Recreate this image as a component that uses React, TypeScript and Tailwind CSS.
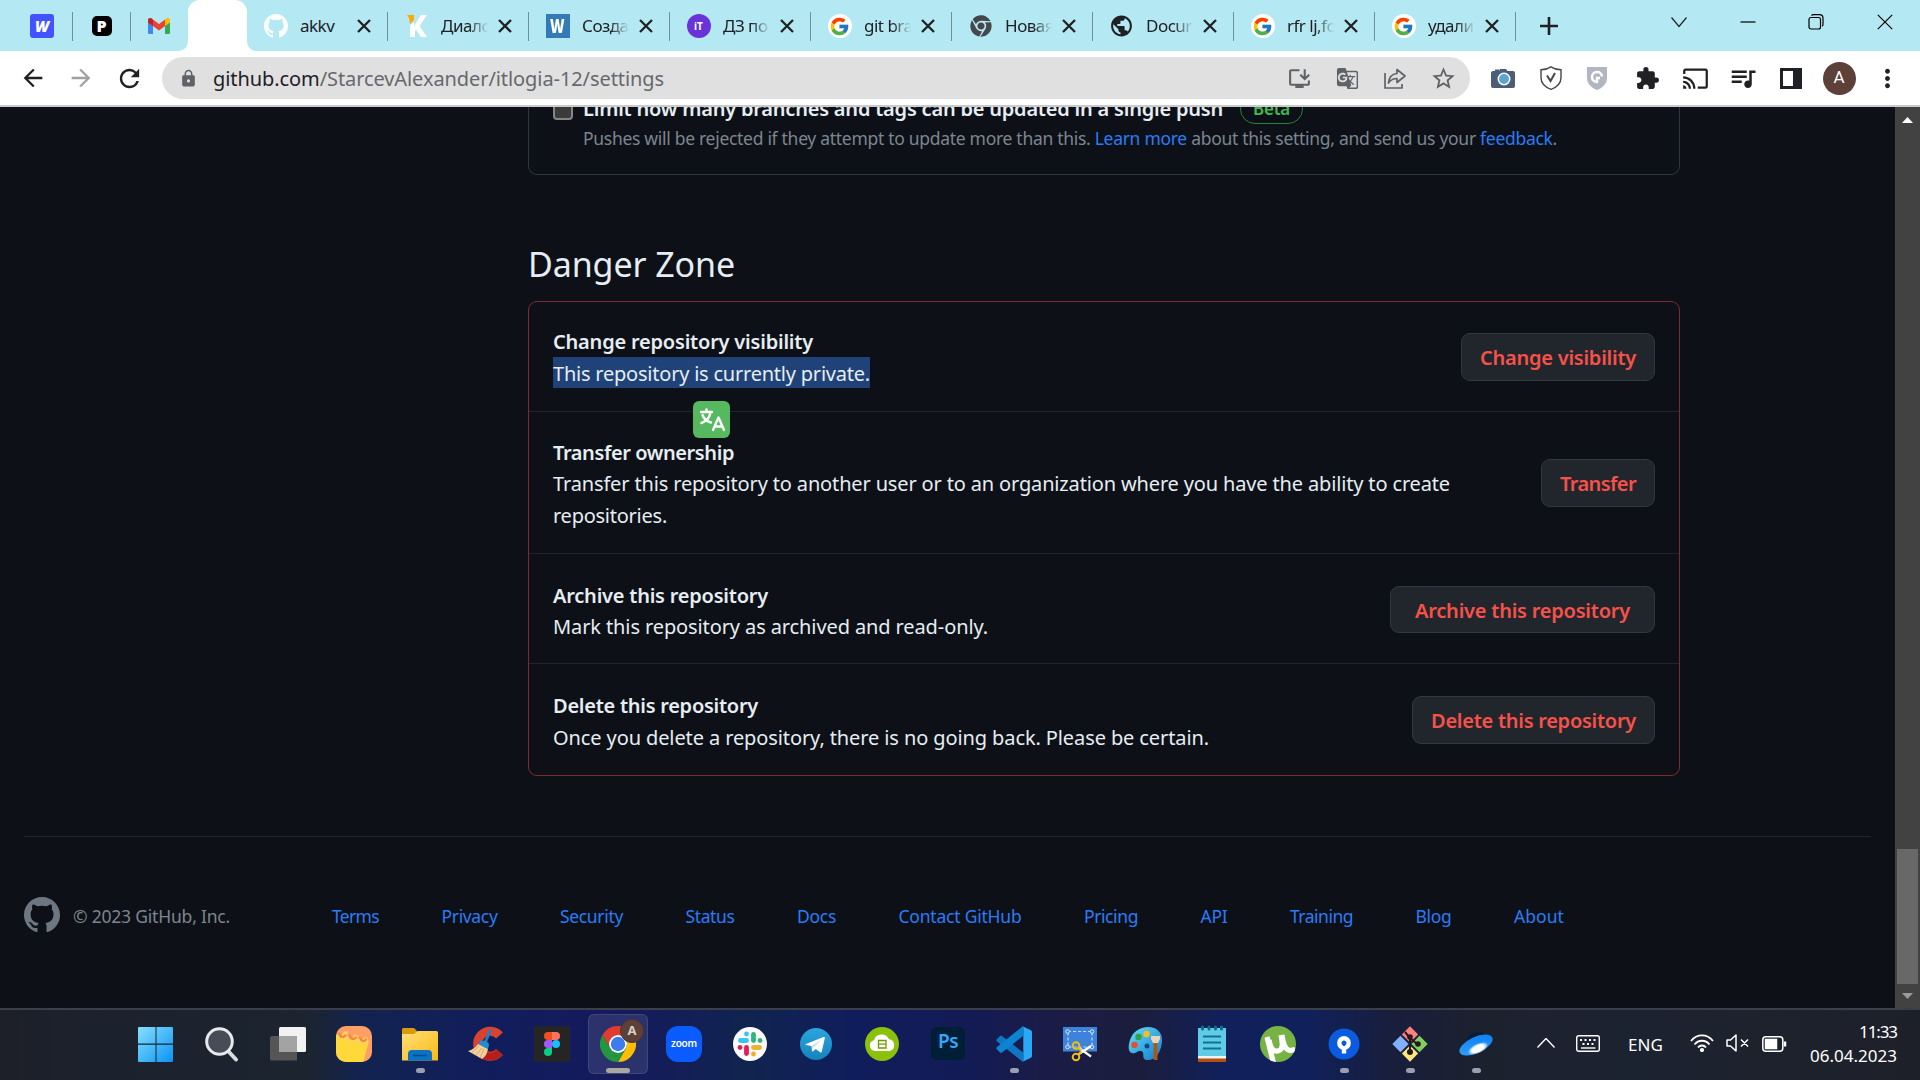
import React, { useLayoutEffect, useRef, useState } from "react";
import { FcGoogle } from "react-icons/fc";
import { FaChrome } from "react-icons/fa";
import {
  MdArrowBack, MdArrowForward, MdCast, MdExtension, MdGTranslate, MdInstallDesktop,
  MdLock, MdMoreVert, MdPublic, MdQueueMusic, MdRefresh, MdStarBorder,
} from "react-icons/md";

/** A single line of text whose tracking is tuned so that it takes the given width. */
function Line({ w, className = "", children }: { w: number; className?: string; children: React.ReactNode }) {
  const ref = useRef<HTMLSpanElement>(null);
  const [spacing, setSpacing] = useState(0);
  useLayoutEffect(() => {
    const el = ref.current;
    if (!el) return;
    const n = (el.textContent || "").length;
    setSpacing((w - el.getBoundingClientRect().width) / n);
  }, [w]);
  return (
    <span ref={ref} className={`inline-block shrink-0 whitespace-nowrap ${className}`} style={{ letterSpacing: spacing }}>
      {children}
    </span>
  );
}

const GithubMark = ({ className }: { className: string }) => (
  <svg viewBox="0 0 16 16" className={className} fill="currentColor">
    <path d="M8 0C3.58 0 0 3.58 0 8c0 3.54 2.29 6.53 5.47 7.59.4.07.55-.17.55-.38 0-.19-.01-.82-.01-1.49-2.01.37-2.53-.49-2.69-.94-.09-.23-.48-.94-.82-1.13-.28-.15-.68-.52-.01-.53.63-.01 1.08.58 1.23.82.72 1.21 1.87.87 2.33.66.07-.52.28-.87.51-1.07-1.78-.2-3.64-.89-3.64-3.95 0-.87.31-1.59.82-2.15-.08-.2-.36-1.02.08-2.12 0 0 .67-.21 2.2.82.64-.18 1.32-.27 2-.27.68 0 1.36.09 2 .27 1.53-1.04 2.2-.82 2.2-.82.44 1.1.16 1.92.08 2.12.51.56.82 1.27.82 2.15 0 3.07-1.87 3.75-3.65 3.95.29.25.54.73.54 1.48 0 1.07-.01 1.93-.01 2.2 0 .21.15.46.55.38A8.013 8.013 0 0 0 16 8c0-4.42-3.58-8-8-8z" />
  </svg>
);

/* ---------- Browser tabs ---------- */

const WFav = () => (
  <span className="flex size-6 items-center justify-center rounded-[3px] bg-[#4353ff] text-[15px] font-black italic text-white">W</span>
);
const PFav = () => (
  <span className="flex size-5 items-center justify-center rounded-[5px] bg-black text-[16px] font-black text-white">P</span>
);
const GmailFav = () => (
  <svg viewBox="0 0 22 16" className="-ml-px h-4 w-[22px]">
    <path d="M0 2v12.500A1.500 1.500 0 0 0 1.500 16H5V6z" fill="#4285f4" />
    <path d="M22 2v12.500a1.500 1.500 0 0 1-1.500 1.500H17V6z" fill="#34a853" />
    <path d="M5 1.500 11 6l6-4.500V8l-6 4.500L5 8z" fill="#ea4335" />
    <path d="M0 2C0 0 2.500-.600 4 .600L5 1.500V8L0 4.500z" fill="#c5221f" />
    <path d="M22 2c0-2-2.500-2.600-4-1.400L17 1.500V8l5-3.500z" fill="#fbbc04" />
  </svg>
);
const KFav = () => (
  <svg viewBox="0 0 24 24" className="size-6">
    <path d="M2 1h7v5L5 10l-1-6z" fill="#ffa800" />
    <path d="M5 11.500 9 8v4l7-11h6l-7.500 11L22 23h-6l-5-7.500L10 17v6H5z" fill="#fff" />
  </svg>
);
const WordFav = () => (
  <span className="flex size-6 items-center justify-center bg-[#337ab7] text-white">
    <span className="scale-x-[.7] text-[20px] font-black leading-none">W</span>
  </span>
);
const ItFav = () => (
  <span className="flex size-6 items-center justify-center rounded-full bg-[#6a33d8] text-[10px] font-bold text-white">iT</span>
);
const GoogleFav = () => (
  <span className="flex size-6 items-center justify-center rounded-full bg-white">
    <FcGoogle className="size-[21px]" />
  </span>
);

const tabs = [
  { icon: <GithubMark className="size-6 text-white" />, title: "akkv" },
  { icon: <KFav />, title: "Диало", fade: true },
  { icon: <WordFav />, title: "Созда", fade: true },
  { icon: <ItFav />, title: "ДЗ по", fade: true },
  { icon: <GoogleFav />, title: "git bra", fade: true },
  { icon: <FaChrome className="size-[22px] text-[#45474a]" />, title: "Новая", fade: true },
  { icon: <MdPublic className="size-[26px] text-[#1f2124]" />, title: "Docur", fade: true },
  { icon: <GoogleFav />, title: "rfr lj,fo", fade: true },
  { icon: <GoogleFav />, title: "удали", fade: true },
];

function TabStrip() {
  return (
    <div className="flex h-[51px] bg-[#b4e8f3] text-[#202124]">
      <div className="flex h-[52px] items-center">
        <div className="flex w-[72px] justify-center pl-3"><WFav /></div>
        <i className="h-[29px] w-px bg-[#6f929a]" />
        <div className="flex w-[57px] justify-center"><PFav /></div>
        <i className="h-[29px] w-px bg-[#6f929a]" />
        <div className="flex w-[57px] justify-center"><GmailFav /></div>
      </div>
      <svg viewBox="0 0 79 51" className="-ml-[10px] -mr-[10px] h-[51px] w-[79px] shrink-0">
        <path d="M0 51c6 0 10-4 10-11V12C10 5 15 0 22 0h35c7 0 12 5 12 12v28c0 7 4 11 10 11z" fill="#fff" />
      </svg>
      <div className="flex h-[52px] items-center">
        {tabs.map((t, i) => (
          <div key={i} className="flex h-[29px] w-[141px] items-center border-r border-[#6f929a] pl-[16px]">
            <div className="flex w-[25px] justify-center">{t.icon}</div>
            <div className={`ml-[12px] w-[47px] whitespace-nowrap text-[17px] leading-7 tracking-[-0.5px] ${t.fade ? "mask-r-from-60% mask-r-to-100%" : ""}`}>
              {t.title}
            </div>
            <svg viewBox="0 0 14 14" className="ml-[10px] size-[14px]" stroke="currentColor" strokeWidth="2.300"><path d="m1 1 12 12M13 1 1 13" /></svg>
          </div>
        ))}
      </div>
      <svg viewBox="0 0 18 18" className="ml-[24px] mt-[17px] size-[18px] shrink-0" stroke="currentColor" strokeWidth="2.600"><path d="M9 0v18M0 9h18" /></svg>
      <div className="ml-auto flex h-11 items-center">
        <svg viewBox="0 0 16 16" className="mx-[26.500px] size-4" fill="none" stroke="#222" strokeWidth="1.200"><path d="M.500 3.500 8 12.500l7.500-9" /></svg>
        <svg viewBox="0 0 16 16" className="mx-[26px] size-4" fill="none" stroke="#000" strokeWidth="1.200"><path d="M.500 8h15" /></svg>
        <svg viewBox="0 0 16 16" className="mx-[26.500px] size-4" fill="none" stroke="#000" strokeWidth="1.200">
          <rect x="1" y="3.500" width="11.500" height="11.500" rx="2" /><path d="M3.500 1.500c.5-.6 1-.8 2-.8h6c2 0 3.500 1.500 3.500 3.500v6c0 1-.2 1.500-.8 2" />
        </svg>
        <svg viewBox="0 0 16 16" className="ml-[26.500px] mr-[27px] size-4" fill="none" stroke="#000" strokeWidth="1.200"><path d="m.800.800 14.400 14.400M15.200.800.800 15.200" /></svg>
      </div>
    </div>
  );
}

/* ---------- Toolbar ---------- */

const Cell = ({ children }: { children: React.ReactNode }) => (
  <div className="flex w-12 shrink-0 items-center justify-center">{children}</div>
);

function Toolbar() {
  return (
    <div className="flex h-[56px] items-center border-b-2 border-[#cbcbcb] bg-white pl-[9px] pr-[9px] text-[#202124]">
      <Cell><MdArrowBack className="size-[28px]" /></Cell>
      <Cell><MdArrowForward className="size-[28px] text-[#a0a1a3]" /></Cell>
      <Cell><MdRefresh className="size-[29px]" /></Cell>
      <div className="ml-[9px] flex h-[42px] w-[1308px] items-center rounded-full bg-[#e0e0e0] pr-[3px] text-[#5f6368]">
        <MdLock className="ml-[17px] size-[19px]" />
        <Line w={451} className="ml-[15px] pt-px text-[20px] text-[#65686c]">
          <span className="text-[#202124]">github.com</span>/StarcevAlexander/itlogia-12/settings
        </Line>
        <div className="ml-auto flex">
          <Cell><MdInstallDesktop className="size-[25px]" /></Cell>
          <Cell><MdGTranslate className="size-[23px]" /></Cell>
          <Cell>
            <svg viewBox="0 0 24 24" className="size-6" fill="none" stroke="#5f6368" strokeWidth="1.700">
              <path d="M2 7v15h17v-4" /><path d="M14 3.500 22 10l-8 6.500v-4c-4 0-6.500 1.500-8.500 4.500.5-5.500 3.500-9 8.500-9.500z" strokeLinejoin="round" />
            </svg>
          </Cell>
          <Cell><MdStarBorder className="size-[27px]" /></Cell>
        </div>
      </div>
      <div className="ml-auto flex">
        <Cell>
          <svg viewBox="0 0 24 20" className="h-5 w-6">
            <path d="M2 3h2V1.500h4V3l1-2h6l1.500 2H22a2 2 0 0 1 2 2v13a2 2 0 0 1-2 2H2a2 2 0 0 1-2-2V5a2 2 0 0 1 2-2z" fill="#4c5d78" />
            <circle cx="13" cy="11" r="6.500" fill="#fff" /><circle cx="13" cy="11" r="5" fill="#5ba5d0" />
          </svg>
        </Cell>
        <Cell>
          <svg viewBox="0 0 22 24" className="h-6 w-[22px]" fill="none" stroke="#45474a" strokeWidth="1.400">
            <path d="M11 .800C8 2.800 5 3.700 1 3.800v7.700c0 6 5 10 10 11.800 5-1.800 10-5.800 10-11.800V3.800C17 3.700 14 2.800 11 .800z" />
            <path d="M7 9.500 10.500 15 15 7" strokeWidth="2" />
          </svg>
        </Cell>
        <Cell>
          <svg viewBox="0 0 20 23" className="-ml-1 h-[23px] w-5">
            <path d="M0 0h20v11c0 6-5 10-10 12C5 21 0 17 0 11z" fill="#b2b6c2" />
            <path d="M15 9.500A5 5 0 1 0 10 15v-4h3" fill="none" stroke="#fff" strokeWidth="2.500" />
          </svg>
        </Cell>
        <Cell><MdExtension className="size-[25px]" /></Cell>
        <Cell><MdCast className="size-[27px]" /></Cell>
        <Cell><MdQueueMusic className="size-[30px]" /></Cell>
        <Cell>
          <div className="h-[21px] w-[22px] border-[3px] border-r-[9px] border-[#202124]" />
        </Cell>
        <Cell><span className="flex size-[33px] items-center justify-center rounded-full bg-[#5d4037] font-[Roboto] text-[17px] text-white">A</span></Cell>
        <Cell><MdMoreVert className="size-[29px]" /></Cell>
      </div>
    </div>
  );
}

/* ---------- Settings page ---------- */

const rows = [
  { h: "h-[110px] border-b", title: "Change repository visibility", tw: 260, lines: [{ t: "This repository is currently private.", w: 317 }], selected: true, button: "Change visibility", bw: 156, box: "h-12 w-[194px]" },
  { h: "h-[142px] border-b", title: "Transfer ownership", tw: 181, lines: [{ t: "Transfer this repository to another user or to an organization where you have the ability to create", w: 897 }, { t: "repositories.", w: 114 }], button: "Transfer", bw: 76, box: "h-12 w-[114px]" },
  { h: "h-[110px] border-b pt-[2px]", title: "Archive this repository", tw: 215, lines: [{ t: "Mark this repository as archived and read-only.", w: 435 }], button: "Archive this repository", bw: 215, box: "h-[47px] w-[265px]" },
  { h: "h-[111px] pt-px", title: "Delete this repository", tw: 205, lines: [{ t: "Once you delete a repository, there is no going back. Please be certain.", w: 656 }], button: "Delete this repository", bw: 205, box: "h-12 w-[243px]" },
];

const links: [string, number][] = [
  ["Terms", 47], ["Privacy", 56], ["Security", 63], ["Status", 49], ["Docs", 39], ["Contact GitHub", 123],
  ["Pricing", 54], ["API", 27], ["Training", 63], ["Blog", 36], ["About", 50],
];

function Settings() {
  return (
    <div className="flex w-[1895px] flex-col overflow-hidden bg-[#0d1117] text-[#e6edf3]">
      <div className="ml-[528px] w-[1152px]">
        <div className="h-[68px] overflow-hidden rounded-b-[9px] border-x border-b border-[#30363d] pl-6">
          <div className="-mt-[14px] flex h-[31px] items-center">
            <span className="mt-[2px] size-5 rounded-[4px] border-2 border-[#858585] bg-[#3b3b3b]" />
            <Line w={640} className="ml-[10px] text-[20px] font-semibold">Limit how many branches and tags can be updated in a single push</Line>
            <span className="ml-[17px] flex h-[30px] w-[63px] items-center justify-center rounded-full border border-[#238636] text-[#3fb950]">
              <Line w={37} className="text-[17px] font-semibold">Beta</Line>
            </span>
          </div>
          <div className="pl-[30px] leading-[28px] text-[#7d8590]">
            <Line w={974} className="text-[17.500px]">
              Pushes will be rejected if they attempt to update more than this. <span className="text-[#2a7cf8]">Learn more</span> about this setting, and send us your <span className="text-[#2a7cf8]">feedback</span>.
            </Line>
          </div>
        </div>
        <h2 className="h-[126px] pt-[62px] text-[34px] leading-[54px]"><Line w={207}>Danger Zone</Line></h2>
        <div className="relative rounded-[9px] border border-[#7d2b2f]">
          {rows.map((r) => (
            <div key={r.title} className={`flex items-center justify-between border-[#21262d] px-6 ${r.h}`}>
              <div className={`flex flex-col items-start text-[20px] ${r.selected ? "" : "pt-px"}`}>
                <Line w={r.tw} className="h-[31.500px] font-semibold leading-[33.500px]">{r.title}</Line>
                {r.lines.map((l) => (
                  <Line key={l.t} w={l.w} className={r.selected ? "h-[31.500px] bg-[#1f4378] leading-[33.500px]" : "h-[31.500px] leading-[33.500px]"}>{l.t}</Line>
                ))}
              </div>
              <button className={`flex items-center justify-center rounded-[9px] border border-[#33383f] bg-[#21262d] pt-[2px] text-[20px] font-semibold text-[#f85149] ${r.box}`}>
                <Line w={r.bw}>{r.button}</Line>
              </button>
            </div>
          ))}
          <span className="absolute left-[164px] top-[99px] flex size-[37px] items-center justify-center rounded-[6px] bg-[#56b85f] text-white">
            <svg viewBox="0 0 37 37" className="size-[37px]" fill="none" stroke="#fff" strokeWidth="2.400" strokeLinecap="round" strokeLinejoin="round">
              <path d="M8 11h11M13.500 8.500V11M9.500 14c1.500 4 5 6.500 8.500 7.500M17.500 11.500c-1 5-4.500 9-9 10.500" />
              <path d="m20 29 5.500-12.500L31 29M22 25.500h7" />
            </svg>
          </span>
        </div>
      </div>
      <footer className="mx-6 mt-[60px] flex h-[160px] items-center border-t border-[#21262d] pb-[3px]">
        <GithubMark className="size-9 text-[#6e7681]" />
        <Line w={157} className="ml-[13px] mt-[2px] text-[17.500px] text-[#7d8590]">© 2023 GitHub, Inc.</Line>
        <nav className="ml-[102px] mt-[2px] flex w-[1232px] justify-between text-[17.500px] text-[#2a7cf8]">
          {links.map(([t, w]) => <Line key={t} w={w}>{t}</Line>)}
        </nav>
      </footer>
    </div>
  );
}

function Scrollbar() {
  return (
    <div className="flex w-[25px] flex-col items-center bg-[#424242]">
      <i className="mt-[10px] h-[6px] w-[11px] bg-white [clip-path:polygon(50%_0,100%_100%,0_100%)]" />
      <i className="mt-[726px] h-[135px] w-[21px] bg-[#686868]" />
      <i className="mt-[9px] h-[6px] w-[11px] bg-[#9b9b9b] [clip-path:polygon(0_0,100%_0,50%_100%)]" />
    </div>
  );
}

/* ---------- Taskbar icons, each on a 36 unit grid ---------- */

const S = ({ children }: { children: React.ReactNode }) => <svg viewBox="0 0 36 36" className="size-9 overflow-visible">{children}</svg>;

const Windows = () => (
  <S>
    <linearGradient id="win" x1="0" y1="0" x2="1" y2="1" gradientUnits="objectBoundingBox"><stop stopColor="#86e0ff" /><stop offset="1" stopColor="#0a93f5" /></linearGradient>
    <path d="M1 1h16.500v16.500H0V2a1 1 0 0 1 1-1zM18.500 1H34a1 1 0 0 1 1 1v15.500H18.500zM0 18.800h17.500V36H1a1 1 0 0 1-1-1zM18.500 18.800H35V35a1 1 0 0 1-1 1H18.500z" fill="url(#win)" />
  </S>
);
const Search = () => (
  <S><path d="m25 26 7 7.500" stroke="#dadcdf" strokeWidth="4" strokeLinecap="round" /><circle cx="15.500" cy="15.500" r="12.800" fill="#474c57" stroke="#e8eaec" strokeWidth="3" /></S>
);
const TaskView = () => (
  <S><rect x="9" y="1" width="27" height="25" rx="1.500" fill="#f2f2f2" /><path d="M1.500 10H27v24.500H1.500A1.500 1.500 0 0 1 0 33V11.500z" fill="#555" /><path d="M9 10h18v16H9z" fill="#a3a3a3" /></S>
);
const Notes = () => (
  <S>
    <clipPath id="nt"><rect width="36" height="36" rx="10" /></clipPath>
    <g clipPath="url(#nt)">
      <path d="M0 0h36v36H0z" fill="#ff9f66" />
      <path d="m-1 8 34 7-6 22H-1z" fill="#ffd83a" />
      <path d="M1 4.500v6l5 1.200V8.500L8 5.500h4l-1 4 4 3 2-1 1-3 4 1-1 4 3 2.500 3-2 .500-2.500h4.500L31 19 1 12z" fill="#ffd166" />
      <path d="M3.500 6.500c-1 5 5.500 6 6 2M14 8.500c-1 5 5.500 6 6 2M24.500 11c-1 4.500 5 5.500 5.500 1.500" fill="none" stroke="#f08a3c" strokeWidth="2.200" />
    </g>
  </S>
);
const Folder = () => (
  <S>
    <path d="M0 3.500A1.500 1.500 0 0 1 1.500 2H12l4 4v4H0z" fill="#d99a0b" />
    <linearGradient id="fol" x1="0" y1="0" x2="1" y2="1"><stop stopColor="#ffe07a" /><stop offset="1" stopColor="#fbb913" /></linearGradient>
    <path d="M0 8h12l4-3h18.500A1.500 1.500 0 0 1 36 6.500V34.500H0z" fill="url(#fol)" />
    <path d="M6 34.500V28a4 4 0 0 1 4-4h16a4 4 0 0 1 4 4v6.500z" fill="#0b72c4" /><path d="M11 29.500h14" stroke="#064d8c" strokeWidth="1.500" />
  </S>
);
const CCleaner = () => (
  <S>
    <path d="M31.500 9.500A12.500 12.500 0 1 0 31.500 26" fill="none" stroke="#d8432f" strokeWidth="9" />
    <path d="M31.500 26a12.500 12.500 0 0 1-16 3" fill="none" stroke="#b51f1a" strokeWidth="8" />
    <path d="m22 5-5 12" stroke="#1d7fc4" strokeWidth="3" strokeLinecap="round" />
    <path d="M12 15c5-1 9 1 9 4l-1 4-10-5z" fill="#1f8fd4" />
    <path d="m10 18 10 5c-1 5-3 8-6 10L0 25c4-1 8-4 10-7z" fill="#f3cf9a" /><path d="m4 26 7-6m-3 9 6-7m-2 10 4-9" stroke="#d8ab70" />
  </S>
);
const Figma = () => (
  <S>
    <rect width="36" height="36" rx="2" fill="#252525" />
    <path d="M18 6h-4a4 4 0 0 0 0 8h4z" fill="#f24e1e" /><path d="M18 6h4a4 4 0 0 1 0 8h-4z" fill="#ff7262" />
    <path d="M18 14h-4a4 4 0 0 0 0 8h4z" fill="#a259ff" /><circle cx="22" cy="18" r="4" fill="#1abcfe" />
    <path d="M18 22h-4a4 4 0 1 0 4 4z" fill="#0acf83" />
  </S>
);
const Chrome = () => (
  <div className="relative">
    <svg viewBox="-18 -18 36 36" className="size-9">
      <path d="M0-9H15.590A18 18 0 0 0-15.590-9L-7.790 4.500A9 9 0 0 1 0-9Z" fill="#e33b2e" />
      <path d="M0-9H15.590A18 18 0 0 0-15.590-9L-7.790 4.500A9 9 0 0 1 0-9Z" fill="#fdbd00" transform="rotate(120)" />
      <path d="M0-9H15.590A18 18 0 0 0-15.590-9L-7.790 4.500A9 9 0 0 1 0-9Z" fill="#24963f" transform="rotate(240)" />
      <circle r="9" fill="#fff" /><circle r="7.200" fill="#3b7ded" />
    </svg>
    <span className="absolute -right-[8px] -top-[7px] flex size-6 items-center justify-center rounded-full border border-[#49352f] bg-[#5d4037] text-[13px] font-bold text-[#d6cecb]">A</span>
  </div>
);
const Zoom = () => (
  <span className="flex size-9 items-center justify-center rounded-[12px] bg-[#0b5cff] text-[10px] font-semibold leading-none tracking-[-0.2px] text-white"><span className="-mt-[3px]">zoom</span></span>
);
const Slack = () => (
  <S>
    <circle cx="18" cy="18" r="17" fill="#fafafa" />
    <g strokeWidth="4.800" strokeLinecap="round" fill="none">
      <path d="M8.500 14.500h6" stroke="#36c5f0" /><path d="M21.500 8.500v6" stroke="#2eb67d" /><path d="M21.500 21.500h6" stroke="#ecb22e" /><path d="M14.500 21.500v6" stroke="#e01e5a" />
      <path d="M14.500 8v.01" stroke="#36c5f0" /><path d="M28 14.500h.01" stroke="#2eb67d" /><path d="M21.500 28v.01" stroke="#ecb22e" /><path d="M8 21.500h.01" stroke="#e01e5a" />
    </g>
  </S>
);
const Telegram = () => (
  <S>
    <linearGradient id="tg" x1="0" y1="0" x2="0" y2="1"><stop stopColor="#2ba6dd" /><stop offset="1" stopColor="#1583bd" /></linearGradient>
    <circle cx="18" cy="18" r="16" fill="url(#tg)" />
    <path d="m8 18 17.500-7c1-.3 1.500 0 1.300 1.200l-3 13.300c-.2 1-.8 1.200-1.600.7l-4.500-3.300-2.200 2.100c-.8.8-1.500.6-1.600-.5l-.4-4.500L8 19c-.8-.3-.7-.7 0-1z" fill="#fff" /><path d="m13.500 20 9.500-6-7.700 7.500-.3 3z" fill="#c5dcea" />
  </S>
);
const Cloud = () => (
  <S>
    <circle cx="18" cy="18" r="17" fill="#8bc10a" />
    <path d="M11 25a5.500 5.500 0 0 1-1-10.800 8 8 0 0 1 15-1 6 6 0 0 1 .500 11.800z" fill="#fff" />
    <path d="M14.500 14.500h7.500v7.500h-7.500zM14.500 18.200H22" fill="none" stroke="#6b9d00" strokeWidth="1.300" />
  </S>
);
const Photoshop = () => (
  <span className="-mt-[2px] flex h-[33px] w-[34px] items-center justify-center rounded-[6px] bg-[#001e36] text-[19px] font-semibold tracking-[-0.5px] text-[#31a8ff]"><span className="-mt-[3px]">Ps</span></span>
);
const VSCode = () => (
  <S>
    <path d="m1 13 3-3c.7-.5 1.300-.5 2 0l21 16.500V36L1 15.500c-.9-.9-.9-1.700 0-2.500z" fill="#0f77c2" />
    <path d="m1 23.500 3 3c.7.500 1.300.5 2 0l21-16.500V0L1 21c-.9.9-.9 1.700 0 2.500z" fill="#0b84d4" />
    <path d="m26 0 8.500 4c1 .5 1.500 1.200 1.500 2v24c0 .8-.5 1.500-1.500 2L26 36c1-.5 1.300-1 1.300-2V2c0-1-.3-1.500-1.300-2z" fill="#29a9f5" />
  </S>
);
const Snip = () => (
  <S>
    <path d="M1 1h34v24.500H1z" fill="#3f82dc" />
    <path d="M6 5.500h24V21H6z" fill="none" stroke="#bfdcff" strokeWidth="1.200" strokeDasharray="3 2" />
    <g fill="#3f82dc" stroke="#d5e8ff"><circle cx="5.500" cy="5.500" r="1.800" /><circle cx="30" cy="5.500" r="1.800" /><circle cx="5.500" cy="21" r="1.800" /><circle cx="30" cy="21" r="1.800" /></g>
    <path d="m17 22 12 8.500M17 28l12-8" stroke="#fff" strokeWidth="2.200" /><g fill="none" stroke="#f0bd12" strokeWidth="2"><circle cx="14" cy="19.500" r="3.300" /><circle cx="14" cy="31" r="3.300" /><path d="m16.500 22 3 2.500m-3 4 3-3" /></g>
  </S>
);
const Paint = () => (
  <S>
    <linearGradient id="pt" x1="0" y1="0" x2="1" y2="1"><stop stopColor="#62e0fa" /><stop offset="1" stopColor="#1579cf" /></linearGradient>
    <path d="M20 1c9 0 15 6 14 15-1 10-6 18-14 18-8 0-2-8-7-9-4-.8-5 3-9 2-4-1-4-7-2-13C4.500 6 12 1 20 1z" fill="url(#pt)" />
    <circle cx="6.500" cy="19" r="3.200" fill="#e35325" /><circle cx="10.500" cy="11" r="3.200" fill="#30a13e" /><circle cx="18.500" cy="8" r="3.200" fill="#fbbd16" /><circle cx="19" cy="20" r="2.500" fill="#0c4a8c" />
    <path d="M25.500 17h4v17h-4z" fill="#a55a16" /><path d="M23 10h9v3l-2 4h-5l-2-4z" fill="#ecd3b3" />
  </S>
);
const Notepad = () => (
  <S>
    <path d="M4 2h28v32H4z" fill="#5fcbe6" /><path d="M4 30h28v3H4z" fill="#f0f3f4" /><path d="M4 32.500h28V36H4z" fill="#b4500f" />
    <path d="M9 10.500h18M9 16.500h18M9 22.500h18" stroke="#10728f" strokeWidth="1.800" /><path d="M8.500 1v2m6.500-2v2m6.500-2v2M27.500 1v2" stroke="#106c8d" strokeWidth="3" strokeLinecap="round" />
  </S>
);
const Torrent = () => (
  <S>
    <clipPath id="tor"><circle cx="18" cy="18" r="18" /></clipPath>
    <circle cx="18" cy="18" r="18" fill="#77b344" />
    <g clipPath="url(#tor)" fill="none" stroke="#fff" strokeWidth="5.200">
      <path d="m7 11 6.500 26" /><path d="M9 14c1.500 8 4 12 9 11S23 18 21 9" /><path d="M22 9c1 8 3 15 8 15.500l5-1" />
    </g>
  </S>
);
const SourceTree = () => (
  <S><circle cx="18" cy="18" r="15.500" fill="#0a5be0" /><circle cx="18" cy="17" r="4.700" fill="none" stroke="#fff" strokeWidth="4.400" /><path d="M18 21v6.500" stroke="#fff" strokeWidth="4.400" /><path d="M18 20v-2" stroke="#0a5be0" strokeWidth="2" /></S>
);
const Git = () => (
  <S>
    <g transform="rotate(45 18 18)"><path d="M5.500 5.500H17V17H5.500z" fill="#ff7f80" /><path d="M19 5.500h11.500V17H19z" fill="#80d060" /><path d="M5.500 19H17v11.500H5.500z" fill="#80b0ff" /><path d="M19 19h11.500v11.500H19z" fill="#ffe680" /></g>
    <path d="m13 6 5 6v13m0-13 7 6" stroke="#241a1a" strokeWidth="2" fill="none" /><g fill="#241a1a"><circle cx="18" cy="11" r="2.800" /><circle cx="18" cy="26" r="3" /><circle cx="26" cy="18" r="2.800" /></g>
  </S>
);
const Saucer = () => (
  <S>
    <ellipse cx="18" cy="11" rx="9" ry="4.500" fill="#0a1c38" transform="rotate(-12 18 11)" />
    <linearGradient id="sc" x1="0" y1="1" x2="1" y2="0"><stop stopColor="#36a6ff" /><stop offset="1" stopColor="#0679f0" /></linearGradient>
    <radialGradient id="glow"><stop stopColor="#fff" /><stop offset=".6" stopColor="#fff" /><stop offset="1" stopColor="#fff" stopOpacity="0" /></radialGradient>
    <ellipse cx="18" cy="19" rx="18" ry="8" fill="url(#sc)" transform="rotate(-25 18 19)" />
    <ellipse cx="20" cy="22.500" rx="11" ry="5" fill="url(#glow)" transform="rotate(-25 20 22.500)" />
  </S>
);

const apps = [
  { icon: <Windows /> }, { icon: <Search /> }, { icon: <TaskView /> }, { icon: <Notes /> }, { icon: <Folder />, open: true },
  { icon: <CCleaner /> }, { icon: <Figma /> }, { icon: <Chrome />, active: true }, { icon: <Zoom /> }, { icon: <Slack /> },
  { icon: <Telegram /> }, { icon: <Cloud /> }, { icon: <Photoshop /> }, { icon: <VSCode />, open: true }, { icon: <Snip /> },
  { icon: <Paint /> }, { icon: <Notepad /> }, { icon: <Torrent /> }, { icon: <SourceTree />, open: true }, { icon: <Git />, open: true },
  { icon: <Saucer />, open: true },
];

function Taskbar() {
  return (
    <div className="flex h-[72px] items-start border-t-2 border-[#3b3f4b] bg-[linear-gradient(90deg,#1e1f28_0px,#1b222e_100px,#1c2430_310px,#122350_360px,#111d5c_500px,#151a5c_620px,#10244f_750px,#101d5c_850px,#131b55_970px,#1a1c48_1040px,#1b1d3c_1140px,#11205a_1220px,#10205a_1310px,#181e3c_1390px,#1c212e_1480px,#1c2330_1640px,#1e2029_1920px)] pl-[123px] text-white">
      {apps.map((a, i) => (
        <div key={i} className="flex w-[66px] shrink-0 justify-center pt-1">
          <div className={`relative flex h-[60px] w-[60px] items-center justify-center rounded-[6px] ${a.active ? "border border-white/10 bg-white/10" : ""}`}>
            {a.icon}
            {a.open && <i className="absolute bottom-[1px] h-[5px] w-[9px] rounded-full bg-[#9a9fb0]" />}
            {a.active && <i className="absolute bottom-0 h-[5px] w-6 rounded-full bg-[#aaa6a2]" />}
          </div>
        </div>
      ))}
      <div className="flex h-[66px] grow items-center">
        <svg viewBox="0 0 18 10" className="ml-[28px] h-[10px] w-[18px]" fill="none" stroke="#fff" strokeWidth="1.400"><path d="m.500 9.500 8.500-9 8.500 9" /></svg>
        <svg viewBox="0 0 24 17" className="ml-[21px] h-[17px] w-6" fill="none" stroke="#fff" strokeWidth="1.400">
          <rect x=".700" y=".700" width="22.600" height="15.600" rx="2" /><path d="M4 5h16" strokeDasharray="2 2.500" strokeWidth="2" /><path d="M6.500 9h12" strokeDasharray="2 2.500" strokeWidth="2" /><path d="M5 13h14.500" />
        </svg>
        <Line w={35} className="ml-7 mt-[3px] text-[17px]">ENG</Line>
        <svg viewBox="0 0 24 18" className="ml-[27px] h-[18px] w-6" fill="none" stroke="#fff" strokeWidth="1.800">
          <path d="M1 7C7-.500 17-.500 23 7M4.500 10.500c4-5 11-5 15 0M8 13.500c2-2.700 6-2.700 8 0" /><circle cx="12" cy="16" r="1.200" fill="#fff" />
        </svg>
        <svg viewBox="0 0 24 18" className="ml-[12px] h-[18px] w-6" fill="none" stroke="#fff" strokeWidth="1.500" strokeLinejoin="round"><path d="M1 6h3.500L10 1v16l-5.500-5H1zM15 5.500l7 7m0-7-7 7" /></svg>
        <svg viewBox="0 0 25 16" className="ml-[12px] mt-px h-4 w-[25px]" fill="none" stroke="#fff" strokeWidth="1.500"><rect x=".800" y=".800" width="20" height="14.400" rx="3" /><path d="M3.500 3.500h11v9h-11z" fill="#fff" /><path d="M23 5.500v5" strokeWidth="2.500" /></svg>
        <div className="ml-auto mr-[23px] mt-px flex flex-col items-end text-[17px] leading-6">
          <Line w={38}>11:33</Line>
          <Line w={87}>06.04.2023</Line>
        </div>
      </div>
    </div>
  );
}

export default function App() {
  return (
    <div className="flex h-[1080px] w-[1920px] flex-col overflow-hidden font-['Noto_Sans',sans-serif]">
      <TabStrip />
      <Toolbar />
      <div className="flex h-[901px]">
        <Settings />
        <Scrollbar />
      </div>
      <Taskbar />
    </div>
  );
}
